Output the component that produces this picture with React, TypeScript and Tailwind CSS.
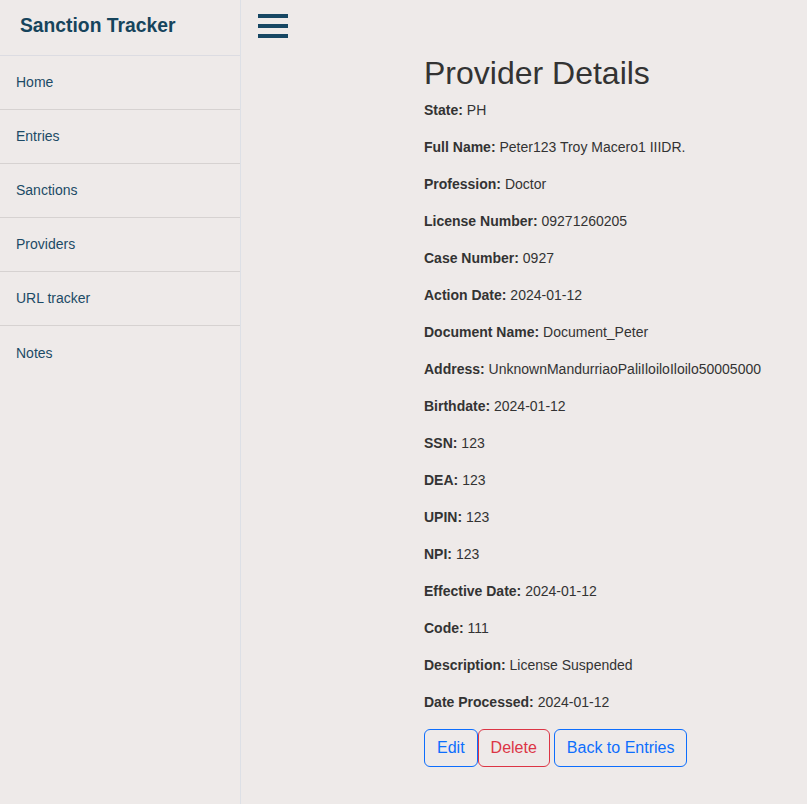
import React from "react";

const navItems = ["Home", "Entries", "Sanctions", "Providers", "URL tracker", "Notes"];

const details: [string, string][] = [
  ["State", "PH"],
  ["Full Name", "Peter123 Troy Macero1 IIIDR."],
  ["Profession", "Doctor"],
  ["License Number", "09271260205"],
  ["Case Number", "0927"],
  ["Action Date", "2024-01-12"],
  ["Document Name", "Document_Peter"],
  ["Address", "UnknownMandurriaoPaliIloiloIloilo50005000"],
  ["Birthdate", "2024-01-12"],
  ["SSN", "123"],
  ["DEA", "123"],
  ["UPIN", "123"],
  ["NPI", "123"],
  ["Effective Date", "2024-01-12"],
  ["Code", "111"],
  ["Description", "License Suspended"],
  ["Date Processed", "2024-01-12"],
];

const App = () => {
  return (
    <div
      className="flex min-h-[804px] w-full bg-[#eeeae9] text-[#333]"
      style={{ fontFamily: '"Liberation Sans", Arial, sans-serif' }}
    >
      {/* sidebar */}
      <aside className="w-[241px] shrink-0 border-r border-[#dde0e6]">
        <div className="h-[56px] border-b border-[#dcdce2] pl-5 pt-[13px]">
          <h1 className="text-[19.3px] font-bold leading-[26px] text-[#16445c]">Sanction Tracker</h1>
        </div>
        <nav>
          {navItems.map((item) => (
            <div
              key={item}
              className="flex h-[54px] items-center border-b border-[#d6d2d1] pl-4 text-[14px] text-[#1c4a66] last:border-b-0"
            >
              {item}
            </div>
          ))}
        </nav>
      </aside>

      {/* main */}
      <main className="flex-1">
        <div className="pl-[17px] pt-[14px]">
          <div className="flex w-[30px] flex-col gap-[6px]">
            <span className="h-[4px] w-[30px] bg-[#174763]" />
            <span className="h-[4px] w-[30px] bg-[#174763]" />
            <span className="h-[4px] w-[30px] bg-[#174763]" />
          </div>
        </div>

        <div className="pl-[183px] pt-[16px]">
          <h2 className="mb-2 text-[32px] font-normal leading-[38px] text-[#333]">Provider Details</h2>
          {details.map(([label, value]) => (
            <p key={label} className="mb-4 text-[14px] leading-[21px]">
              <strong className="font-bold">{label}:</strong> {value}
            </p>
          ))}
          <div className="flex">
            <button className="h-[38px] rounded-[6px] border border-[#0d6efd] px-3 text-[16px] text-[#0d6efd]">
              Edit
            </button>
            <button className="h-[38px] rounded-[6px] border border-[#dc3545] px-3 text-[16px] text-[#dc3545]">
              Delete
            </button>
            <button className="ml-1 h-[38px] rounded-[6px] border border-[#0d6efd] px-3 text-[16px] text-[#0d6efd]">
              Back to Entries
            </button>
          </div>
        </div>
      </main>
    </div>
  );
};

export default App;
